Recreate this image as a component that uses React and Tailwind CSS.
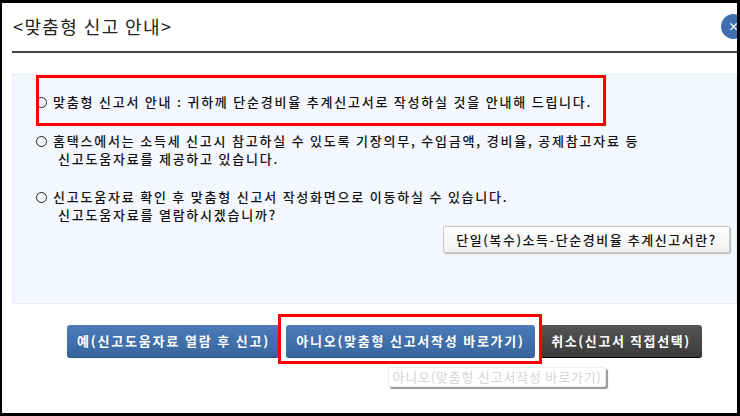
const KO = "font-['Noto_Sans_CJK_KR',sans-serif]"

function Note({ first, second }) {
  return (
    <div className="flex gap-[6px] text-[13px] font-medium leading-[18px] tracking-[1.78px] text-[#111]">
      <span className="mt-[4px] h-[11px] w-[11px] shrink-0 rounded-full border-[1.5px] border-[#222]" />
      <div>
        <p className="whitespace-nowrap">{first}</p>
        {second && <p className="ml-[5px] whitespace-nowrap">{second}</p>}
      </div>
    </div>
  )
}

function ActionButton({ className, children }) {
  return (
    <button
      type="button"
      className={`flex h-[33px] items-center justify-center rounded-[3px] text-[13px] font-bold text-white ${className}`}
    >
      {children}
    </button>
  )
}

export default function App() {
  return (
    <div className={`relative h-[416px] w-[740px] overflow-hidden border-t-[3px] border-r-[3px] border-b-[3px] border-l-[2px] border-black bg-white ${KO}`}>
      <h1 className="ml-[11px] mt-[10px] text-[18px] font-normal leading-[26px] tracking-[1.4px] text-[#222]">&lt;맞춤형 신고 안내&gt;</h1>
      <div className="ml-[10px] mt-[12px] h-[2px] bg-[#444]" />

      <section className="ml-[10px] mt-[21px] h-[230px] border border-[#e6ebf5] bg-[#f4f7fe] pl-[23px] pt-[18px]">
        <Note first="맞춤형 신고서 안내 : 귀하께 단순경비율 추계신고서로 작성하실 것을 안내해 드립니다." />
        <div className="mt-[21px]">
          <Note
            first="홈택스에서는 소득세 신고시 참고하실 수 있도록 기장의무, 수입금액, 경비율, 공제참고자료 등"
            second="신고도움자료를 제공하고 있습니다."
          />
        </div>
        <div className="mt-[20px]">
          <Note
            first="신고도움자료 확인 후 맞춤형 신고서 작성화면으로 이동하실 수 있습니다."
            second="신고도움자료를 열람하시겠습니까?"
          />
        </div>
        <div className="mt-[2px] flex justify-end pr-[6px]">
          <button
            type="button"
            className="flex h-[27px] w-[287px] items-center justify-center rounded-[2px] border border-[#c8c8c8] bg-gradient-to-b from-white to-[#f1f1f1] text-[13px] font-medium tracking-[1.55px] text-[#111] shadow-[1px_1px_1px_#bbb]"
          >
            단일(복수)소득-단순경비율 추계신고서란?
          </button>
        </div>
      </section>

      <div className="ml-[65px] mt-[21px] flex gap-[6px]">
        <ActionButton className="w-[213px] border-b border-[#2c5488] bg-gradient-to-b from-[#4a7cb8] to-[#38659f] tracking-[1.8px]">예(신고도움자료 열람 후 신고)</ActionButton>
        <ActionButton className="w-[249px] border-b border-[#2c5488] bg-gradient-to-b from-[#4a7cb8] to-[#38659f] tracking-[1.75px]">아니오(맞춤형 신고서작성 바로가기)</ActionButton>
        <ActionButton className="ml-[-1px] w-[162px] border-b border-black bg-gradient-to-b from-[#555] to-[#3a3a3a] tracking-[1.6px]">취소(신고서 직접선택)</ActionButton>
      </div>

      {/* close button clipped by the right edge */}
      <div className="absolute right-[-9px] top-[11px] flex h-[25px] w-[25px] items-center justify-start rounded-full bg-[#3f6fae] pl-[7px] text-[11px] font-bold text-white">
        ×
      </div>

      {/* red callouts */}
      <div className="pointer-events-none absolute left-[34px] top-[72px] h-[51px] w-[570px] border-[3px] border-[#f00]" />
      <div className="pointer-events-none absolute left-[276px] top-[311px] h-[50px] w-[264px] border-[3px] border-[#f00]" />

      {/* tooltip */}
      <div className="absolute left-[386px] top-[364px] flex h-[20px] w-[218px] items-center justify-center whitespace-nowrap rounded-[2px] border border-[#eee] bg-white text-[13px] tracking-[0.8px] text-[#d4d4d4] shadow-[2px_2px_1px_#999]">
        아니오(맞춤형 신고서작성 바로가기)
      </div>
    </div>
  )
}
